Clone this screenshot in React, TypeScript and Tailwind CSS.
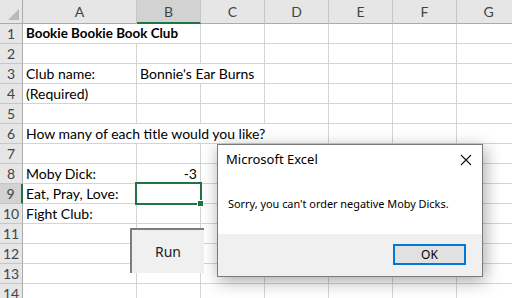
import React from "react";

const COLS = ["A", "B", "C", "D", "E", "F", "G"];
const WIDTHS = [114, 64, 64, 64, 64, 64, 64];

type Cell = { span: number; text?: string; bold?: boolean; right?: boolean };

const rows: Cell[][] = [
  [{ span: 2, text: "Bookie Bookie Book Club", bold: true }],
  [],
  [{ span: 1, text: "Club name:" }, { span: 2, text: "Bonnie's Ear Burns" }],
  [{ span: 1, text: "(Required)" }],
  [],
  [{ span: 4, text: "How many of each title would you like?" }],
  [],
  [{ span: 1, text: "Moby Dick:" }, { span: 1, text: "-3", right: true }],
  [{ span: 1, text: "Eat, Pray, Love:" }],
  [{ span: 1, text: "Fight Club:" }],
  [],
  [],
  [],
  [],
];

function fillRow(r: Cell[]): Cell[] {
  const out = [...r];
  let used = out.reduce((s, c) => s + c.span, 0);
  while (used < 7) {
    out.push({ span: 1 });
    used++;
  }
  return out;
}

export default function App() {
  return (
    <div
      className="relative w-[512px] h-[298px] overflow-hidden bg-white text-black"
      style={{ fontFamily: "Lato, 'Noto Sans', sans-serif" }}
    >
      {/* header row */}
      <div className="flex h-[24px]">
        <div className="relative w-[23px] shrink-0 bg-[#e6e6e6] border-r border-b border-[#ababab]">
          <svg className="absolute left-0 top-0" width="22" height="23" viewBox="0 0 22 23">
            <polygon points="19,9 19,20 8,20" fill="#b9b9b9" />
          </svg>
        </div>
        {COLS.map((c, i) => (
          <div
            key={c}
            style={{ width: WIDTHS[i] }}
            className={
              "shrink-0 flex items-center justify-center text-[14px] text-[#444] border-r border-r-[#c6c6c6] " +
              (c === "B"
                ? "bg-[#d2d2d2] border-b-2 border-b-[#217346]"
                : "bg-[#e6e6e6] border-b border-b-[#ababab]")
            }
          >
            {c}
          </div>
        ))}
      </div>

      {rows.map((r, ri) => {
        const cells = fillRow(r);
        let col = 0;
        const sel = ri === 8;
        return (
          <div key={ri} className="flex h-[20px]">
            <div
              className={
                "w-[23px] shrink-0 flex items-center justify-center text-[14px] text-[#444] border-b border-b-[#c6c6c6] " +
                (sel ? "bg-[#d2d2d2] border-r-2 border-r-[#217346]" : "bg-[#e6e6e6] border-r border-r-[#ababab]")
              }
            >
              {ri + 1}
            </div>
            {cells.map((c, ci) => {
              const w = WIDTHS.slice(col, col + c.span).reduce((a, b) => a + b, 0);
              col += c.span;
              return (
                <div
                  key={ci}
                  style={{ width: w }}
                  className={
                    "shrink-0 border-r border-b border-[#d4d4d4] flex items-center px-[3px] pt-[1px] whitespace-nowrap overflow-hidden leading-none " +
                    (c.bold ? "font-bold text-[13.4px] " : "text-[14px] ") +
                    (c.right ? "justify-end" : "")
                  }
                >
                  {c.text}
                </div>
              );
            })}
          </div>
        );
      })}

      {/* selection */}
      <div className="absolute left-[135px] top-[182px] w-[67px] h-[23px] border-2 border-[#217346]" />
      <div className="absolute left-[197px] top-[200px] w-[7px] h-[7px] bg-[#217346] border border-white" />

      {/* Run button */}
      <div className="absolute left-[130px] top-[228px] w-[74px] h-[45px] bg-[#f0f0f0] border-t-2 border-l-2 border-[#7d7d7d] flex items-center justify-center text-[14px] text-[#222]" style={{ fontFamily: "'Noto Sans', sans-serif" }}>
        Run
      </div>

      {/* Dialog */}
      <div
        className="absolute left-[217px] top-[144px] w-[266px] h-[133px] bg-white border border-[#7a7a7a] shadow-[2px_4px_16px_rgba(0,0,0,0.35)] flex flex-col"
        style={{ fontFamily: "'Noto Sans', sans-serif" }}
      >
        <div className="h-[30px] flex items-center justify-between pl-[8px] pr-[10px] text-[13px]">
          <span>Microsoft Excel</span>
          <svg width="12" height="12" viewBox="0 0 12 12">
            <path d="M1 1 L11 11 M11 1 L1 11" stroke="#111" strokeWidth="1.1" />
          </svg>
        </div>
        <div className="h-[59px] flex items-center pl-[10px] text-[10.9px]">
          Sorry, you can't order negative Moby Dicks.
        </div>
        <div className="flex-1 bg-[#f0f0f0] flex justify-end pt-[10px] pr-[16px]">
          <div className="w-[73px] h-[21px] bg-[#e1e1e1] border-2 border-[#0078d7] flex items-center justify-center text-[12px]">
            OK
          </div>
        </div>
      </div>
    </div>
  );
}
